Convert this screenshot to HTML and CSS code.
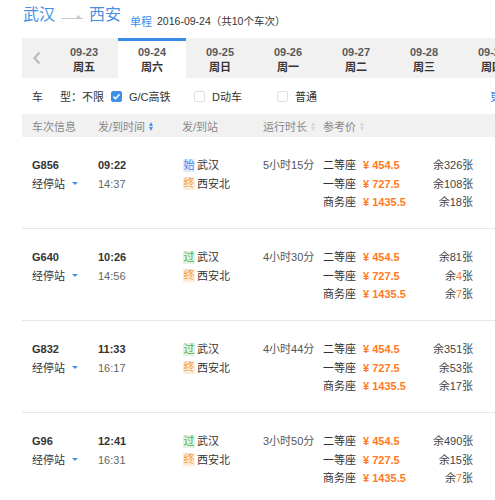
FILE: index.html
```html
<!DOCTYPE html>
<html lang="zh-CN">
<head>
<meta charset="utf-8">
<title>武汉 - 西安</title>
<link rel="stylesheet" href="styles.css">
</head>
<body>
<div class="page">
  <div class="route">
    <span class="city">武汉</span>
    <svg class="arrow" width="22" height="8" viewBox="0 0 22 8"><line x1="0" y1="6.5" x2="22" y2="6.5" stroke="#c8c8c8" stroke-width="1"/><path d="M15 6 L17.5 3 L20 6 Z" fill="#c8c8c8"/></svg>
    <span class="city">西安</span>
    <span class="trip">单程</span>
    <span class="sum">2016-09-24（共10个车次）</span>
  </div>

  <div class="dates">
    <div class="prev"><svg width="10" height="14" viewBox="0 0 10 14"><path d="M7.5 1.5 L2.5 7 L7.5 12.5" fill="none" stroke="#bdbdbd" stroke-width="2.4"/></svg></div>
    <div class="tab"><span class="d">09-23</span><span class="w">周五</span></div>
    <div class="tab on"><span class="d">09-24</span><span class="w">周六</span></div>
    <div class="tab"><span class="d">09-25</span><span class="w">周日</span></div>
    <div class="tab"><span class="d">09-26</span><span class="w">周一</span></div>
    <div class="tab"><span class="d">09-27</span><span class="w">周二</span></div>
    <div class="tab"><span class="d">09-28</span><span class="w">周三</span></div>
    <div class="tab"><span class="d">09-29</span><span class="w">周四</span></div>
  </div>

  <div class="filter">
    <span class="lbl1">车</span><span class="lbl2">型：不限</span>
    <span class="opt"><span class="cb checked"><svg width="11" height="11" viewBox="0 0 11 11"><path d="M2.5 5.6 L4.6 7.7 L8.6 3.3" fill="none" stroke="#fff" stroke-width="1.5"/></svg></span>G/C高铁</span>
    <span class="opt"><span class="cb"></span>D动车</span>
    <span class="opt"><span class="cb"></span>普通</span>
    <span class="more">更多</span>
  </div>

  <div class="thead">
    <span>车次信息</span>
    <span>发/到时间<i class="sort on"></i></span>
    <span>发/到站</span>
    <span>运行时长<i class="sort"></i></span>
    <span>参考价<i class="sort"></i></span>
  </div>

  <div class="row">
    <div class="c-train"><b>G856</b><span class="stops">经停站<i class="caret"></i></span></div>
    <div class="c-time"><b>09:22</b><span>14:37</span></div>
    <div class="c-st"><span><i class="tag start">始</i>武汉</span><span><i class="tag end">终</i>西安北</span></div>
    <div class="c-dur">5小时15分</div>
    <div class="c-seats">
      <div class="seat"><span>二等座</span><b>¥ 454.5</b><span class="left">余326张</span></div>
      <div class="seat"><span>一等座</span><b>¥ 727.5</b><span class="left">余108张</span></div>
      <div class="seat"><span>商务座</span><b>¥ 1435.5</b><span class="left">余18张</span></div>
    </div>
  </div>

  <div class="row">
    <div class="c-train"><b>G640</b><span class="stops">经停站<i class="caret"></i></span></div>
    <div class="c-time"><b>10:26</b><span>14:56</span></div>
    <div class="c-st"><span><i class="tag pass">过</i>武汉</span><span><i class="tag end">终</i>西安北</span></div>
    <div class="c-dur">4小时30分</div>
    <div class="c-seats">
      <div class="seat"><span>二等座</span><b>¥ 454.5</b><span class="left">余81张</span></div>
      <div class="seat"><span>一等座</span><b>¥ 727.5</b><span class="left">余<em>4</em>张</span></div>
      <div class="seat"><span>商务座</span><b>¥ 1435.5</b><span class="left">余<em>7</em>张</span></div>
    </div>
  </div>

  <div class="row">
    <div class="c-train"><b>G832</b><span class="stops">经停站<i class="caret"></i></span></div>
    <div class="c-time"><b>11:33</b><span>16:17</span></div>
    <div class="c-st"><span><i class="tag pass">过</i>武汉</span><span><i class="tag end">终</i>西安北</span></div>
    <div class="c-dur">4小时44分</div>
    <div class="c-seats">
      <div class="seat"><span>二等座</span><b>¥ 454.5</b><span class="left">余351张</span></div>
      <div class="seat"><span>一等座</span><b>¥ 727.5</b><span class="left">余53张</span></div>
      <div class="seat"><span>商务座</span><b>¥ 1435.5</b><span class="left">余17张</span></div>
    </div>
  </div>

  <div class="row">
    <div class="c-train"><b>G96</b><span class="stops">经停站<i class="caret"></i></span></div>
    <div class="c-time"><b>12:41</b><span>16:31</span></div>
    <div class="c-st"><span><i class="tag pass">过</i>武汉</span><span><i class="tag end">终</i>西安北</span></div>
    <div class="c-dur">3小时50分</div>
    <div class="c-seats">
      <div class="seat"><span>二等座</span><b>¥ 454.5</b><span class="left">余490张</span></div>
      <div class="seat"><span>一等座</span><b>¥ 727.5</b><span class="left">余15张</span></div>
      <div class="seat"><span>商务座</span><b>¥ 1435.5</b><span class="left">余<em>7</em>张</span></div>
    </div>
  </div>
</div>
</body>
</html>
```

FILE: styles.css
```css
html, body {
  margin: 0;
  padding: 0;
  overflow: hidden;
  background: #fff;
}
body {
  font-family: "Liberation Sans", Arial, "Noto Sans CJK SC", sans-serif;
  font-size: 11px;
  color: #333;
}
.page {
  width: 600px;
}
.route {
  display: flex;
  align-items: flex-start;
  height: 38px;
  padding-left: 23px;
  box-sizing: border-box;
}
.city {
  font-size: 16px;
  line-height: 22px;
  margin-top: 4px;
  color: #4a90e2;
}
.arrow {
  margin: 12px 6px 0 6px;
}
.trip {
  font-size: 11px;
  line-height: 14px;
  margin: 15px 0 0 9px;
  color: #3c8ce7;
}
.sum {
  font-size: 10.5px;
  line-height: 14px;
  margin: 14px 0 0 5px;
  color: #333;
}
.dates {
  display: flex;
  height: 40px;
  margin-left: 22px;
  background: #f1f1f1;
  overflow: hidden;
}
.prev {
  flex: 0 0 28px;
  display: flex;
  align-items: center;
  justify-content: center;
  padding-left: 2px;
  box-sizing: border-box;
}
.tab {
  flex: 0 0 68px;
  display: flex;
  flex-direction: column;
  align-items: center;
  box-sizing: border-box;
  border-top: 3px solid transparent;
  padding-top: 4px;
  font-weight: bold;
  line-height: 15px;
}
.tab.on {
  background: #fff;
  border-top-color: #3b8be6;
}
.tab .d {
  color: #5a5a5a;
}
.tab .w {
  color: #333;
}
.filter {
  display: flex;
  align-items: center;
  height: 36px;
  padding-left: 32px;
  color: #333;
}
.lbl1 {
  width: 28px;
}
.lbl2 {
  width: 51px;
}
.opt {
  display: flex;
  align-items: center;
  width: 83px;
}
.cb {
  width: 11px;
  height: 11px;
  box-sizing: border-box;
  border: 1px solid #e0e0e0;
  border-radius: 2px;
  background: #fff;
  margin-right: 7px;
  display: flex;
}
.cb.checked {
  background: #3d8fe8;
  border-color: #3d8fe8;
}
.cb.checked svg {
  margin: -1px;
}
.more {
  margin-left: 130px;
  color: #3c8ce7;
}
.thead {
  display: grid;
  grid-template-columns: 66px 84px 81px 60px 1fr;
  align-items: center;
  height: 23px;
  margin-left: 22px;
  padding-left: 10px;
  background: #f1f1f1;
  color: #888;
}
.sort {
  display: inline-block;
  vertical-align: middle;
  position: relative;
  width: 5px;
  height: 9px;
  margin-left: 4px;
  margin-top: -2px;
}
.sort::before, .sort::after {
  content: "";
  position: absolute;
  left: 0;
  border-left: 2.5px solid transparent;
  border-right: 2.5px solid transparent;
}
.sort::before {
  top: 0;
  border-bottom: 4px solid #d6d6d6;
}
.sort::after {
  bottom: 0;
  border-top: 4px solid #d6d6d6;
}
.sort.on::before {
  border-bottom-color: #4a90e2;
}
.sort.on::after {
  border-top-color: #4a90e2;
}
.row {
  display: grid;
  grid-template-columns: 66px 84px 81px 60px 1fr;
  align-items: start;
  height: 91px;
  box-sizing: content-box;
  margin-left: 22px;
  padding-left: 10px;
  border-bottom: 1px solid #e8e8e8;
  line-height: 18.5px;
}
.row > div {
  margin-top: 19px;
}
.c-train, .c-time, .c-st {
  display: flex;
  flex-direction: column;
}
.c-train b, .c-time b {
  color: #333;
}
.c-time span {
  color: #666;
}
.stops {
  display: flex;
  align-items: center;
}
.caret {
  display: inline-block;
  margin-left: 7px;
  border-left: 3px solid transparent;
  border-right: 3px solid transparent;
  border-top: 3px solid #4a90e2;
}
.c-st span {
  display: flex;
  align-items: center;
}
.tag {
  font-style: normal;
  display: inline-block;
  width: 12px;
  height: 13px;
  line-height: 13px;
  text-align: center;
  font-size: 11px;
  margin: 0 2px 0 1px;
}
.tag.start {
  color: #3c8ce7;
  background: #e4eefa;
}
.tag.end {
  color: #f5a040;
  background: #fcecdc;
}
.tag.pass {
  color: #4caf50;
  background: #e4f4e4;
}
.c-dur {
  color: #555;
}
.seat {
  display: grid;
  grid-template-columns: 40px 70px 40px;
}
.seat b {
  color: #ff7a22;
}
.seat .left {
  text-align: right;
  white-space: nowrap;
  color: #444;
}
.seat em {
  font-style: normal;
  color: #ff7a22;
}
```
